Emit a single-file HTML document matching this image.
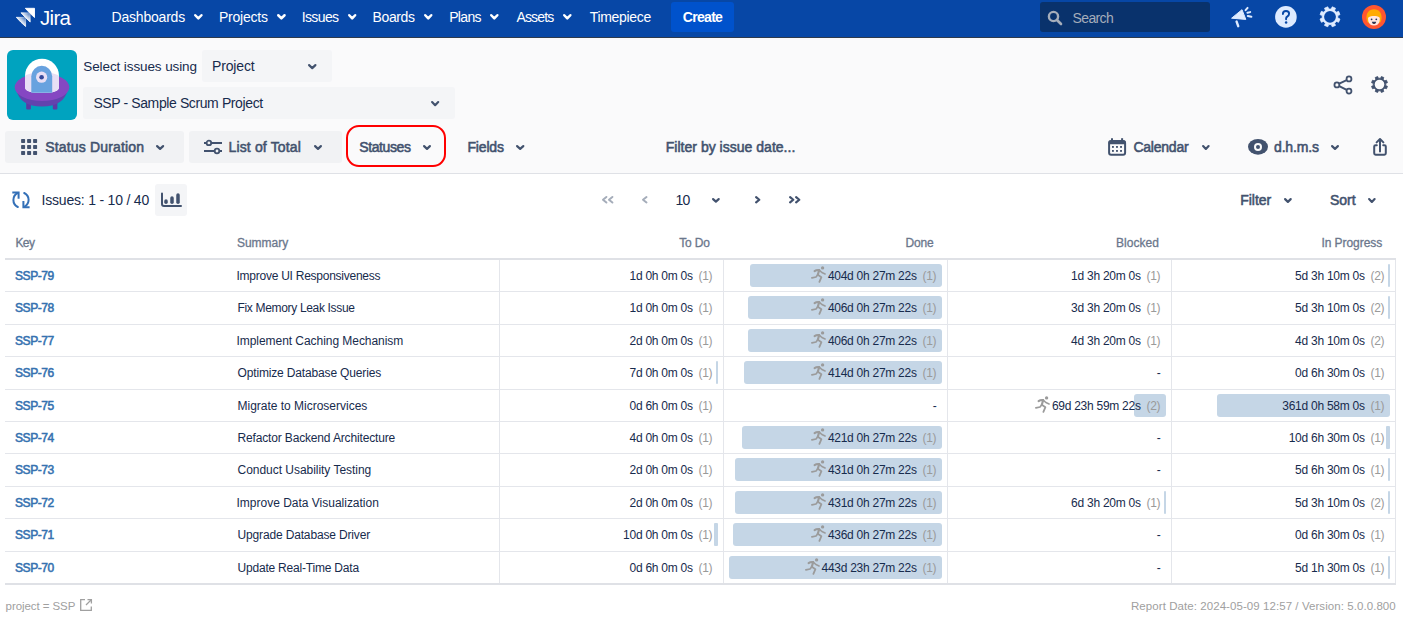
<!DOCTYPE html>
<html><head><meta charset="utf-8"><title>Status Duration</title>
<style>
html,body{margin:0;padding:0;width:1403px;height:620px;overflow:hidden;background:#FFFFFF;font-family:"Liberation Sans", sans-serif;position:relative}
svg{display:block}
</style></head><body>
<div style="position:absolute;left:0px;top:38px;width:1403px;height:135px;background:#FAFAFB;border-radius:0px;"></div>
<div style="position:absolute;left:0px;top:173px;width:1403px;height:1px;background:#DFE1E6;border-radius:0px;"></div>
<div style="position:absolute;left:0px;top:0px;width:1403px;height:37px;background:#0747A6;border-radius:0px;"></div>
<div style="position:absolute;left:0px;top:37px;width:1403px;height:1px;background:#2E3A4C;border-radius:0px;"></div>
<svg style="position:absolute;left:15px;top:7px" width="22" height="22" viewBox="0 0 22 22">
<defs><linearGradient id="lg1" x1="1" y1="0" x2="0" y2="1"><stop offset="0.05" stop-color="#fff" stop-opacity="0.25"/><stop offset="0.55" stop-color="#fff"/></linearGradient></defs>
<path d="M1.3 10.3 H10.6 V19.5 Q5.6 15.2 1.3 10.3 Z" fill="url(#lg1)" stroke="url(#lg1)" stroke-width="0.9" stroke-linejoin="round"/>
<path d="M6 5.8 H15.2 V15 Q10.3 10.7 6 5.8 Z" fill="url(#lg1)" stroke="url(#lg1)" stroke-width="0.9" stroke-linejoin="round"/>
<path d="M10.3 1.3 H19.5 V10.5 Q14.6 6.2 10.3 1.3 Z" fill="#fff" stroke="#fff" stroke-width="0.9" stroke-linejoin="round"/>
</svg>
<svg style="position:absolute;left:191.9px;top:12.3px;overflow:visible" width="12.7" height="9.7"><polyline points="3.25,3.25 6.35,6.45 9.45,3.25" fill="none" stroke="#FFFFFF" stroke-width="2.5" stroke-linecap="round" stroke-linejoin="round"/></svg>
<svg style="position:absolute;left:275.2px;top:12.3px;overflow:visible" width="12.8" height="9.7"><polyline points="3.25,3.25 6.4,6.45 9.55,3.25" fill="none" stroke="#FFFFFF" stroke-width="2.5" stroke-linecap="round" stroke-linejoin="round"/></svg>
<svg style="position:absolute;left:345.6px;top:12.3px;overflow:visible" width="12.4" height="9.7"><polyline points="3.25,3.25 6.2,6.45 9.15,3.25" fill="none" stroke="#FFFFFF" stroke-width="2.5" stroke-linecap="round" stroke-linejoin="round"/></svg>
<svg style="position:absolute;left:421.9px;top:12.3px;overflow:visible" width="12.5" height="9.7"><polyline points="3.25,3.25 6.25,6.45 9.25,3.25" fill="none" stroke="#FFFFFF" stroke-width="2.5" stroke-linecap="round" stroke-linejoin="round"/></svg>
<svg style="position:absolute;left:488.2px;top:12.3px;overflow:visible" width="12.6" height="9.7"><polyline points="3.25,3.25 6.3,6.45 9.35,3.25" fill="none" stroke="#FFFFFF" stroke-width="2.5" stroke-linecap="round" stroke-linejoin="round"/></svg>
<svg style="position:absolute;left:561.1px;top:12.3px;overflow:visible" width="12.6" height="9.7"><polyline points="3.25,3.25 6.3,6.45 9.35,3.25" fill="none" stroke="#FFFFFF" stroke-width="2.5" stroke-linecap="round" stroke-linejoin="round"/></svg>
<div style="position:absolute;left:671px;top:2px;width:63px;height:30px;background:#0052CC;border-radius:3px;"></div>
<div style="position:absolute;left:1040px;top:2px;width:170px;height:30px;background:#09326C;border-radius:3px;"></div>
<svg style="position:absolute;left:1047px;top:10px" width="16" height="16" viewBox="0 0 16 16"><circle cx="6.5" cy="6.5" r="4.6" fill="none" stroke="#A5ADBA" stroke-width="2.4"/><line x1="10" y1="10" x2="14" y2="14" stroke="#A5ADBA" stroke-width="2.6" stroke-linecap="round"/></svg>
<svg style="position:absolute;left:1228px;top:5px" width="26" height="24" viewBox="0 0 26 24">
<path d="M3.6 13.2 L14 4.7 L17.8 14.4 Z" fill="#DEEBFF" stroke="#DEEBFF" stroke-width="1" stroke-linejoin="round"/>
<line x1="8.6" y1="16.6" x2="10.2" y2="21.2" stroke="#DEEBFF" stroke-width="2.4" stroke-linecap="round"/>
<line x1="17.6" y1="5.2" x2="19.6" y2="2.9" stroke="#DEEBFF" stroke-width="2" stroke-linecap="round"/>
<line x1="19.4" y1="7.8" x2="22.2" y2="7.1" stroke="#DEEBFF" stroke-width="2" stroke-linecap="round"/>
<line x1="19.8" y1="11" x2="23.4" y2="11.8" stroke="#DEEBFF" stroke-width="2" stroke-linecap="round"/>
</svg>
<svg style="position:absolute;left:1274px;top:5px" width="24" height="24" viewBox="0 0 24 24"><circle cx="11.9" cy="11.9" r="10.8" fill="#DEEBFF"/>
<path d="M8.9 9.1 C8.9 7.1 10.3 6 12 6 C13.8 6 15.1 7.2 15.1 8.8 C15.1 10.3 14.2 11 13.2 11.6 C12.5 12 12.1 12.5 12.1 13.4 V14.2" fill="none" stroke="#0747A6" stroke-width="1.9" stroke-linecap="round"/>
<circle cx="12.1" cy="17.4" r="1.25" fill="#0747A6"/></svg>
<svg style="position:absolute;left:1318px;top:5px" width="24" height="24" viewBox="0 0 24 24"><polygon points="19.79,13.12 21.96,14.00 20.60,17.28 18.44,16.38 16.58,18.24 17.48,20.40 14.20,21.76 13.32,19.59 10.68,19.59 9.80,21.76 6.52,20.40 7.42,18.24 5.56,16.38 3.40,17.28 2.04,14.00 4.21,13.12 4.21,10.48 2.04,9.60 3.40,6.32 5.56,7.22 7.42,5.36 6.52,3.20 9.80,1.84 10.68,4.01 13.32,4.01 14.20,1.84 17.48,3.20 16.58,5.36 18.44,7.22 20.60,6.32 21.96,9.60 19.79,10.48" fill="#DEEBFF" stroke="#DEEBFF" stroke-width="0.8" stroke-linejoin="round"/><circle cx="12" cy="11.8" r="5.9" fill="#0747A6"/></svg>
<svg style="position:absolute;left:1362px;top:5px" width="24" height="24" viewBox="0 0 24 24"><circle cx="12" cy="12" r="12" fill="#FF5630"/>
<path d="M4.5 14 C3.8 8 7 4.2 12 4.2 C17 4.2 20.2 8 19.5 14 C19 17 18 18 17 18 L7 18 C6 18 5 17 4.5 14 Z" fill="#FFAB00"/>
<path d="M6 13.2 C6.6 11.6 9 10.6 12 11 C15 10.6 17.4 11.6 17.8 13.2 L17.6 16.2 C17 19 15 20.4 12 20.4 C9 20.4 7 19 6.3 16.2 Z" fill="#FFE7E0"/>
<circle cx="9.6" cy="14.3" r="0.9" fill="#253858"/><circle cx="14.3" cy="14.3" r="0.9" fill="#253858"/>
<path d="M9.9 16.7 H14.2 C14 18.3 13 19.1 12 19.1 C11 19.1 10.1 18.3 9.9 16.7 Z" fill="#253858"/><path d="M10.8 18.3 C11.3 18.9 12.7 18.9 13.2 18.3 Z" fill="#DE350B"/></svg>
<svg style="position:absolute;left:7px;top:50px" width="70" height="70" viewBox="0 0 70 70"><defs><clipPath id="sauc"><ellipse cx="35" cy="37.5" rx="27.3" ry="15.5"/></clipPath></defs>
<rect width="70" height="70" rx="6" fill="#00A3BF"/>
<rect x="19.2" y="47" width="4.7" height="12.4" rx="1" fill="#5B3BA5"/>
<rect x="45.8" y="47" width="4.6" height="12.4" rx="1" fill="#5B3BA5"/>
<path d="M9.5 40 Q13 56.5 35 56.5 Q57 56.5 60.5 40 Z" fill="#6243AE"/>
<ellipse cx="35" cy="37.3" rx="27.3" ry="13.8" fill="#8547C2"/>
<path d="M18 25.8 A17 17 0 0 1 52 25.8 V37 Q52 43 35 43 Q18 43 18 37 Z" fill="#FFFFFF"/>
<path d="M18 25.8 A17 17 0 0 1 52 25.8 V37 Q52 43 35 43 Q18 43 18 37 Z" fill="#E8DFF5" clip-path="url(#sauc)"/>
<path d="M24.3 26.3 A10.45 10.45 0 0 1 45.2 26.3 V42.8 H24.3 Z" fill="#68A2DF"/>
<circle cx="34.6" cy="27.2" r="5.6" fill="#E8DFF5"/>
<circle cx="34.6" cy="27.2" r="2.3" fill="#35489A"/></svg>
<div style="position:absolute;left:202px;top:50px;width:130px;height:32px;background:#F4F5F7;border-radius:3px;"></div>
<svg style="position:absolute;left:305.7px;top:62px;overflow:visible" width="12.5" height="9.2"><polyline points="3.1,3.1 6.25,6.1 9.4,3.1" fill="none" stroke="#42526E" stroke-width="2.2" stroke-linecap="round" stroke-linejoin="round"/></svg>
<div style="position:absolute;left:83px;top:87px;width:372px;height:32px;background:#F4F5F7;border-radius:3px;"></div>
<svg style="position:absolute;left:428.9px;top:98.7px;overflow:visible" width="12.3" height="9.3"><polyline points="3.1,3.1 6.15,6.2 9.2,3.1" fill="none" stroke="#42526E" stroke-width="2.2" stroke-linecap="round" stroke-linejoin="round"/></svg>
<svg style="position:absolute;left:1332px;top:74px" width="22" height="22" viewBox="0 0 22 22"><circle cx="4.9" cy="10.9" r="2.45" fill="none" stroke="#42526E" stroke-width="1.8"/>
<circle cx="17" cy="4.9" r="2.45" fill="none" stroke="#42526E" stroke-width="1.8"/>
<circle cx="17" cy="17.1" r="2.45" fill="none" stroke="#42526E" stroke-width="1.8"/>
<line x1="7.2" y1="9.7" x2="14.7" y2="6.1" stroke="#42526E" stroke-width="1.9"/>
<line x1="7.2" y1="12.1" x2="14.7" y2="15.9" stroke="#42526E" stroke-width="1.9"/></svg>
<svg style="position:absolute;left:1368px;top:73px" width="24" height="24" viewBox="0 0 24 24"><polygon points="17.79,12.66 19.49,13.35 18.46,15.84 16.77,15.13 15.13,16.77 15.84,18.46 13.35,19.49 12.66,17.79 10.34,17.79 9.65,19.49 7.16,18.46 7.87,16.77 6.23,15.13 4.54,15.84 3.51,13.35 5.21,12.66 5.21,10.34 3.51,9.65 4.54,7.16 6.23,7.87 7.87,6.23 7.16,4.54 9.65,3.51 10.34,5.21 12.66,5.21 13.35,3.51 15.84,4.54 15.13,6.23 16.77,7.87 18.46,7.16 19.49,9.65 17.79,10.34" fill="#42526E" stroke="#42526E" stroke-width="0.8" stroke-linejoin="round"/><circle cx="11.5" cy="11.5" r="4.8" fill="#FAFAFB"/></svg>
<div style="position:absolute;left:5px;top:131px;width:179px;height:32px;background:#F1F2F4;border-radius:3px;"></div>
<svg style="position:absolute;left:21px;top:139px" width="17" height="17" viewBox="0 0 17 17"><rect x="0.1" y="0" width="4" height="4" rx="0.7" fill="#42526E"/><rect x="0.1" y="6" width="4" height="4" rx="0.7" fill="#42526E"/><rect x="0.1" y="12" width="4" height="4" rx="0.7" fill="#42526E"/><rect x="6.1" y="0" width="4" height="4" rx="0.7" fill="#42526E"/><rect x="6.1" y="6" width="4" height="4" rx="0.7" fill="#42526E"/><rect x="6.1" y="12" width="4" height="4" rx="0.7" fill="#42526E"/><rect x="12.1" y="0" width="4" height="4" rx="0.7" fill="#42526E"/><rect x="12.1" y="6" width="4" height="4" rx="0.7" fill="#42526E"/><rect x="12.1" y="12" width="4" height="4" rx="0.7" fill="#42526E"/></svg>
<svg style="position:absolute;left:154px;top:143px;overflow:visible" width="12.2" height="9"><polyline points="3.1,3.1 6.1,5.9 9.1,3.1" fill="none" stroke="#42526E" stroke-width="2.2" stroke-linecap="round" stroke-linejoin="round"/></svg>
<div style="position:absolute;left:189px;top:131px;width:153px;height:32px;background:#F1F2F4;border-radius:3px;"></div>
<svg style="position:absolute;left:203px;top:138px" width="20" height="18" viewBox="0 0 20 18"><line x1="1" y1="5" x2="19" y2="5" stroke="#42526E" stroke-width="2"/><line x1="1" y1="13" x2="19" y2="13" stroke="#42526E" stroke-width="2"/>
<circle cx="5.9" cy="4.9" r="2.3" fill="#F1F2F4" stroke="#42526E" stroke-width="1.8"/><circle cx="14" cy="13" r="2.3" fill="#F1F2F4" stroke="#42526E" stroke-width="1.8"/></svg>
<svg style="position:absolute;left:312px;top:143px;overflow:visible" width="12" height="9"><polyline points="3.1,3.1 6,5.9 8.9,3.1" fill="none" stroke="#42526E" stroke-width="2.2" stroke-linecap="round" stroke-linejoin="round"/></svg>
<div style="position:absolute;left:346px;top:125px;width:96px;height:38px;border:2px solid #FF0000;border-radius:13px"></div>
<svg style="position:absolute;left:421px;top:143px;overflow:visible" width="12" height="9"><polyline points="3.1,3.1 6,5.9 8.9,3.1" fill="none" stroke="#42526E" stroke-width="2.2" stroke-linecap="round" stroke-linejoin="round"/></svg>
<svg style="position:absolute;left:514px;top:143px;overflow:visible" width="12.4" height="9"><polyline points="3.1,3.1 6.2,5.9 9.3,3.1" fill="none" stroke="#42526E" stroke-width="2.2" stroke-linecap="round" stroke-linejoin="round"/></svg>
<svg style="position:absolute;left:1107px;top:137px" width="20" height="20" viewBox="0 0 20 20"><rect x="2.1" y="3.9" width="16" height="13.8" rx="2" fill="none" stroke="#42526E" stroke-width="2"/><rect x="1.6" y="3.4" width="17" height="3.8" rx="1.5" fill="#42526E"/>
<line x1="5" y1="1.2" x2="5" y2="4" stroke="#42526E" stroke-width="2"/><line x1="15.1" y1="1.2" x2="15.1" y2="4" stroke="#42526E" stroke-width="2"/><rect x="5.0" y="9" width="1.85" height="1.85" fill="#42526E"/><rect x="5.0" y="13" width="1.85" height="1.85" fill="#42526E"/><rect x="9.05" y="9" width="1.85" height="1.85" fill="#42526E"/><rect x="9.05" y="13" width="1.85" height="1.85" fill="#42526E"/><rect x="13.1" y="9" width="1.85" height="1.85" fill="#42526E"/><rect x="13.1" y="13" width="1.85" height="1.85" fill="#42526E"/></svg>
<svg style="position:absolute;left:1199.5px;top:143px;overflow:visible" width="11.7" height="9"><polyline points="3.1,3.1 5.85,5.9 8.6,3.1" fill="none" stroke="#42526E" stroke-width="2.2" stroke-linecap="round" stroke-linejoin="round"/></svg>
<svg style="position:absolute;left:1247px;top:138px" width="22" height="18" viewBox="0 0 22 18"><ellipse cx="11" cy="8.85" rx="10" ry="7.8" fill="#42526E"/><circle cx="11" cy="8.9" r="4" fill="#FAFAFB"/><circle cx="11" cy="8.9" r="2" fill="#42526E"/></svg>
<svg style="position:absolute;left:1329px;top:143px;overflow:visible" width="12" height="9"><polyline points="3.1,3.1 6,5.9 8.9,3.1" fill="none" stroke="#42526E" stroke-width="2.2" stroke-linecap="round" stroke-linejoin="round"/></svg>
<svg style="position:absolute;left:1371px;top:137px" width="18" height="20" viewBox="0 0 18 20"><path d="M9 14.4 V2.2 M5.6 5.4 L9 2 L12.4 5.4" fill="none" stroke="#42526E" stroke-width="2" stroke-linecap="round" stroke-linejoin="round"/>
<path d="M5.8 8.2 H4.6 Q3.2 8.2 3.2 9.6 V16.3 Q3.2 17.7 4.6 17.7 H13.4 Q14.8 17.7 14.8 16.3 V9.6 Q14.8 8.2 13.4 8.2 H12.2" fill="none" stroke="#42526E" stroke-width="2" stroke-linecap="round"/></svg>
<svg style="position:absolute;left:11px;top:190px" width="20" height="20" viewBox="0 0 20 20"><path d="M6.6 3.2 C3.8 4.6 2.4 7 2.4 10 C2.4 13 4 15.6 6.8 17" fill="none" stroke="#3470B7" stroke-width="2" stroke-linecap="round"/>
<path d="M2.3 2.6 H7.6 V7.8" fill="none" stroke="#3470B7" stroke-width="2" stroke-linecap="square"/>
<path d="M13.2 3 C16 4.4 17.6 6.8 17.6 9.8 C17.6 12.8 16 15.4 13.3 16.8" fill="none" stroke="#3470B7" stroke-width="2" stroke-linecap="round"/>
<path d="M17.6 17.2 H12.4 V12" fill="none" stroke="#3470B7" stroke-width="2" stroke-linecap="square"/></svg>
<div style="position:absolute;left:155px;top:184px;width:32px;height:32px;background:#F4F5F7;border-radius:3px;"></div>
<svg style="position:absolute;left:160px;top:192px" width="22" height="16" viewBox="0 0 22 16"><path d="M2 1.5 V12 Q2 14 4 14 H21" fill="none" stroke="#42526E" stroke-width="2" stroke-linecap="round"/>
<line x1="6" y1="9" x2="6" y2="10.3" stroke="#42526E" stroke-width="3.5" stroke-linecap="round"/>
<line x1="12" y1="6" x2="12" y2="10.3" stroke="#42526E" stroke-width="3.5" stroke-linecap="round"/>
<line x1="18" y1="3" x2="18" y2="10.3" stroke="#42526E" stroke-width="3.5" stroke-linecap="round"/></svg>
<svg style="position:absolute;left:599.8px;top:194.3px" width="9.4" height="11.5"><polyline points="6.4,3 3,5.75 6.4,8.5" fill="none" stroke="#A5ADBA" stroke-width="2" stroke-linecap="round" stroke-linejoin="round"/></svg>
<svg style="position:absolute;left:605.8px;top:194.3px" width="9.4" height="11.5"><polyline points="6.4,3 3,5.75 6.4,8.5" fill="none" stroke="#A5ADBA" stroke-width="2" stroke-linecap="round" stroke-linejoin="round"/></svg>
<svg style="position:absolute;left:639.7px;top:194.3px" width="9.5" height="11.5"><polyline points="6.5,3 3,5.75 6.5,8.5" fill="none" stroke="#A5ADBA" stroke-width="2" stroke-linecap="round" stroke-linejoin="round"/></svg>
<svg style="position:absolute;left:710px;top:195.9px;overflow:visible" width="11.8" height="8.7"><polyline points="3.1,3.1 5.9,5.6 8.7,3.1" fill="none" stroke="#42526E" stroke-width="2.2" stroke-linecap="round" stroke-linejoin="round"/></svg>
<svg style="position:absolute;left:752.7px;top:194.3px" width="9.4" height="11.5"><polyline points="3.1,3.1 6.3,5.75 3.1,8.4" fill="none" stroke="#42526E" stroke-width="2.2" stroke-linecap="round" stroke-linejoin="round"/></svg>
<svg style="position:absolute;left:786.8px;top:194.3px" width="9.4" height="11.5"><polyline points="3.1,3.1 6.3,5.75 3.1,8.4" fill="none" stroke="#42526E" stroke-width="2.2" stroke-linecap="round" stroke-linejoin="round"/></svg>
<svg style="position:absolute;left:792.7px;top:194.3px" width="9.4" height="11.5"><polyline points="3.1,3.1 6.3,5.75 3.1,8.4" fill="none" stroke="#42526E" stroke-width="2.2" stroke-linecap="round" stroke-linejoin="round"/></svg>
<svg style="position:absolute;left:1282px;top:196px;overflow:visible" width="11.8" height="9"><polyline points="3.1,3.1 5.9,5.9 8.7,3.1" fill="none" stroke="#42526E" stroke-width="2.2" stroke-linecap="round" stroke-linejoin="round"/></svg>
<svg style="position:absolute;left:1366.2px;top:196px;overflow:visible" width="11.7" height="9"><polyline points="3.1,3.1 5.85,5.9 8.6,3.1" fill="none" stroke="#42526E" stroke-width="2.2" stroke-linecap="round" stroke-linejoin="round"/></svg>
<div style="position:absolute;left:5px;top:258px;width:1391px;height:2px;background:#DFE1E6;border-radius:0px;"></div>
<div style="position:absolute;left:5px;top:291px;width:1391px;height:1px;background:#E4E6EB;border-radius:0px;"></div>
<div style="position:absolute;left:5px;top:324px;width:1391px;height:1px;background:#E4E6EB;border-radius:0px;"></div>
<div style="position:absolute;left:5px;top:356px;width:1391px;height:1px;background:#E4E6EB;border-radius:0px;"></div>
<div style="position:absolute;left:5px;top:389px;width:1391px;height:1px;background:#E4E6EB;border-radius:0px;"></div>
<div style="position:absolute;left:5px;top:421px;width:1391px;height:1px;background:#E4E6EB;border-radius:0px;"></div>
<div style="position:absolute;left:5px;top:453px;width:1391px;height:1px;background:#E4E6EB;border-radius:0px;"></div>
<div style="position:absolute;left:5px;top:486px;width:1391px;height:1px;background:#E4E6EB;border-radius:0px;"></div>
<div style="position:absolute;left:5px;top:518px;width:1391px;height:1px;background:#E4E6EB;border-radius:0px;"></div>
<div style="position:absolute;left:5px;top:551px;width:1391px;height:1px;background:#E4E6EB;border-radius:0px;"></div>
<div style="position:absolute;left:5px;top:583px;width:1391px;height:2px;background:#DFE1E6;border-radius:0px;"></div>
<div style="position:absolute;left:499px;top:260px;width:1px;height:323px;background:#E4E6EB;border-radius:0px;"></div>
<div style="position:absolute;left:723px;top:260px;width:1px;height:323px;background:#E4E6EB;border-radius:0px;"></div>
<div style="position:absolute;left:947px;top:260px;width:1px;height:323px;background:#E4E6EB;border-radius:0px;"></div>
<div style="position:absolute;left:1171px;top:260px;width:1px;height:323px;background:#E4E6EB;border-radius:0px;"></div>
<div style="position:absolute;left:1395px;top:260px;width:1px;height:323px;background:#E4E6EB;border-radius:0px;"></div>
<div style="position:absolute;left:750px;top:264px;width:192px;height:23px;background:#C5D6E6;border-radius:3px;"></div>
<div style="position:absolute;left:1388px;top:264px;width:2px;height:23px;background:#C5D6E6;border-radius:1px;"></div>
<div style="position:absolute;left:748px;top:296px;width:194px;height:23px;background:#C5D6E6;border-radius:3px;"></div>
<div style="position:absolute;left:1388px;top:296px;width:2px;height:23px;background:#C5D6E6;border-radius:1px;"></div>
<div style="position:absolute;left:748px;top:329px;width:194px;height:23px;background:#C5D6E6;border-radius:3px;"></div>
<div style="position:absolute;left:716px;top:361px;width:2px;height:23px;background:#C5D6E6;border-radius:1px;"></div>
<div style="position:absolute;left:744px;top:361px;width:198px;height:23px;background:#C5D6E6;border-radius:3px;"></div>
<div style="position:absolute;left:1134px;top:394px;width:32px;height:23px;background:#C5D6E6;border-radius:3px;"></div>
<div style="position:absolute;left:1217px;top:394px;width:173px;height:23px;background:#C5D6E6;border-radius:3px;"></div>
<div style="position:absolute;left:742px;top:426px;width:200px;height:23px;background:#C5D6E6;border-radius:3px;"></div>
<div style="position:absolute;left:1386px;top:426px;width:4px;height:23px;background:#C5D6E6;border-radius:1px;"></div>
<div style="position:absolute;left:735px;top:458px;width:207px;height:23px;background:#C5D6E6;border-radius:3px;"></div>
<div style="position:absolute;left:1388px;top:458px;width:2px;height:23px;background:#C5D6E6;border-radius:1px;"></div>
<div style="position:absolute;left:735px;top:491px;width:207px;height:23px;background:#C5D6E6;border-radius:3px;"></div>
<div style="position:absolute;left:1164px;top:491px;width:2px;height:23px;background:#C5D6E6;border-radius:1px;"></div>
<div style="position:absolute;left:1388px;top:491px;width:2px;height:23px;background:#C5D6E6;border-radius:1px;"></div>
<div style="position:absolute;left:714px;top:523px;width:4px;height:23px;background:#C5D6E6;border-radius:1px;"></div>
<div style="position:absolute;left:733px;top:523px;width:209px;height:23px;background:#C5D6E6;border-radius:3px;"></div>
<div style="position:absolute;left:729px;top:556px;width:213px;height:23px;background:#C5D6E6;border-radius:3px;"></div>
<div style="position:absolute;left:1388px;top:556px;width:2px;height:23px;background:#C5D6E6;border-radius:1px;"></div>
<svg style="position:absolute;left:79px;top:598px" width="15" height="15" viewBox="0 0 15 15"><path d="M6 1.7 H1.7 V12.3 H12.3 V8.5" fill="none" stroke="#A0A0A0" stroke-width="1.3"/><path d="M8.5 1.6 H12.4 V5.5 M12.4 1.6 L7 7" fill="none" stroke="#A0A0A0" stroke-width="1.3"/></svg>
<div style="position:absolute;left:40.00px;top:8.00px;font-size:20.5px;line-height:20.5px;font-weight:400;color:#FFFFFF;letter-spacing:-0.710px;white-space:nowrap;">Jira</div>
<div style="position:absolute;left:111.60px;top:10.00px;font-size:14px;line-height:14px;font-weight:400;color:#FFFFFF;letter-spacing:-0.210px;white-space:nowrap;">Dashboards</div>
<div style="position:absolute;left:219.00px;top:10.00px;font-size:14px;line-height:14px;font-weight:400;color:#FFFFFF;letter-spacing:-0.225px;white-space:nowrap;">Projects</div>
<div style="position:absolute;left:301.70px;top:10.00px;font-size:14px;line-height:14px;font-weight:400;color:#FFFFFF;letter-spacing:-0.612px;white-space:nowrap;">Issues</div>
<div style="position:absolute;left:372.60px;top:10.00px;font-size:14px;line-height:14px;font-weight:400;color:#FFFFFF;letter-spacing:-0.392px;white-space:nowrap;">Boards</div>
<div style="position:absolute;left:449.20px;top:10.00px;font-size:14px;line-height:14px;font-weight:400;color:#FFFFFF;letter-spacing:-0.655px;white-space:nowrap;">Plans</div>
<div style="position:absolute;left:516.40px;top:10.00px;font-size:14px;line-height:14px;font-weight:400;color:#FFFFFF;letter-spacing:-0.843px;white-space:nowrap;">Assets</div>
<div style="position:absolute;left:589.80px;top:10.00px;font-size:14px;line-height:14px;font-weight:400;color:#FFFFFF;letter-spacing:-0.334px;white-space:nowrap;">Timepiece</div>
<div style="position:absolute;left:682.80px;top:10.00px;font-size:14px;line-height:14px;font-weight:700;color:#FFFFFF;letter-spacing:-0.699px;white-space:nowrap;">Create</div>
<div style="position:absolute;left:1072.50px;top:10.80px;font-size:14px;line-height:14px;font-weight:400;color:#A5ADBA;letter-spacing:-0.614px;white-space:nowrap;">Search</div>
<div style="position:absolute;left:83.30px;top:60.00px;font-size:13.5px;line-height:13.5px;font-weight:400;color:#172B4D;letter-spacing:-0.103px;white-space:nowrap;">Select issues using</div>
<div style="position:absolute;left:212.00px;top:59.10px;font-size:14px;line-height:14px;font-weight:400;color:#172B4D;letter-spacing:-0.147px;white-space:nowrap;">Project</div>
<div style="position:absolute;left:93.40px;top:96.00px;font-size:14px;line-height:14px;font-weight:400;color:#172B4D;letter-spacing:-0.389px;white-space:nowrap;">SSP - Sample Scrum Project</div>
<div style="position:absolute;left:45.30px;top:139.60px;font-size:14px;line-height:14px;font-weight:400;color:#42526E;letter-spacing:0.164px;white-space:nowrap;-webkit-text-stroke:0.55px currentColor">Status Duration</div>
<div style="position:absolute;left:228.50px;top:139.60px;font-size:14px;line-height:14px;font-weight:400;color:#42526E;letter-spacing:0.150px;white-space:nowrap;-webkit-text-stroke:0.55px currentColor">List of Total</div>
<div style="position:absolute;left:359.20px;top:139.80px;font-size:14px;line-height:14px;font-weight:400;color:#42526E;letter-spacing:-0.382px;white-space:nowrap;-webkit-text-stroke:0.55px currentColor">Statuses</div>
<div style="position:absolute;left:467.50px;top:139.60px;font-size:14px;line-height:14px;font-weight:400;color:#42526E;letter-spacing:-0.189px;white-space:nowrap;-webkit-text-stroke:0.55px currentColor">Fields</div>
<div style="position:absolute;left:665.80px;top:139.60px;font-size:14px;line-height:14px;font-weight:400;color:#42526E;letter-spacing:0.015px;white-space:nowrap;-webkit-text-stroke:0.55px currentColor">Filter by issue date...</div>
<div style="position:absolute;left:1133.40px;top:139.60px;font-size:14px;line-height:14px;font-weight:400;color:#42526E;letter-spacing:-0.222px;white-space:nowrap;-webkit-text-stroke:0.55px currentColor">Calendar</div>
<div style="position:absolute;left:1274.00px;top:139.60px;font-size:14px;line-height:14px;font-weight:400;color:#42526E;letter-spacing:-0.151px;white-space:nowrap;-webkit-text-stroke:0.55px currentColor">d.h.m.s</div>
<div style="position:absolute;left:41.50px;top:193.40px;font-size:14px;line-height:14px;font-weight:400;color:#172B4D;letter-spacing:-0.200px;white-space:nowrap;">Issues: 1 - 10 / 40</div>
<div style="position:absolute;left:675.60px;top:192.60px;font-size:14px;line-height:14px;font-weight:400;color:#172B4D;letter-spacing:-0.986px;white-space:nowrap;">10</div>
<div style="position:absolute;left:1240.20px;top:192.90px;font-size:14px;line-height:14px;font-weight:400;color:#42526E;letter-spacing:-0.010px;white-space:nowrap;-webkit-text-stroke:0.55px currentColor">Filter</div>
<div style="position:absolute;left:1330.00px;top:192.90px;font-size:14px;line-height:14px;font-weight:400;color:#42526E;letter-spacing:-0.029px;white-space:nowrap;-webkit-text-stroke:0.55px currentColor">Sort</div>
<div style="position:absolute;left:15.40px;top:237.00px;font-size:12px;line-height:12px;font-weight:400;color:#6B778C;letter-spacing:-0.539px;white-space:nowrap;-webkit-text-stroke:0.3px currentColor">Key</div>
<div style="position:absolute;left:236.90px;top:237.00px;font-size:12px;line-height:12px;font-weight:400;color:#6B778C;letter-spacing:-0.007px;white-space:nowrap;-webkit-text-stroke:0.3px currentColor">Summary</div>
<div style="position:absolute;left:679.20px;top:237.00px;font-size:12px;line-height:12px;font-weight:400;color:#6B778C;letter-spacing:-0.168px;white-space:nowrap;-webkit-text-stroke:0.3px currentColor">To Do</div>
<div style="position:absolute;left:905.50px;top:237.00px;font-size:12px;line-height:12px;font-weight:400;color:#6B778C;letter-spacing:-0.138px;white-space:nowrap;-webkit-text-stroke:0.3px currentColor">Done</div>
<div style="position:absolute;left:1116.00px;top:237.00px;font-size:12px;line-height:12px;font-weight:400;color:#6B778C;letter-spacing:0.030px;white-space:nowrap;-webkit-text-stroke:0.3px currentColor">Blocked</div>
<div style="position:absolute;left:1321.40px;top:237.00px;font-size:12px;line-height:12px;font-weight:400;color:#6B778C;letter-spacing:-0.056px;white-space:nowrap;-webkit-text-stroke:0.3px currentColor">In Progress</div>
<div style="position:absolute;left:15.00px;top:270.00px;font-size:12px;line-height:12px;font-weight:400;color:#3572B0;letter-spacing:-0.436px;white-space:nowrap;-webkit-text-stroke:0.55px currentColor">SSP-79</div>
<div style="position:absolute;left:236.50px;top:270.00px;font-size:12px;line-height:12px;font-weight:400;color:#172B4D;letter-spacing:-0.253px;white-space:nowrap;">Improve UI Responsiveness</div>
<div style="position:absolute;left:698.53px;top:270.00px;font-size:12px;line-height:12px;font-weight:400;color:#9A9A9A;letter-spacing:-0.350px;white-space:nowrap;">(1)</div>
<div style="position:absolute;left:629.53px;top:270.00px;font-size:12px;line-height:12px;font-weight:400;color:#172B4D;letter-spacing:-0.264px;white-space:nowrap;">1d 0h 0m 0s</div>
<div style="position:absolute;left:922.53px;top:270.00px;font-size:12px;line-height:12px;font-weight:400;color:#9A9A9A;letter-spacing:-0.350px;white-space:nowrap;">(1)</div>
<div style="position:absolute;left:827.89px;top:270.00px;font-size:12px;line-height:12px;font-weight:400;color:#172B4D;letter-spacing:-0.264px;white-space:nowrap;">404d 0h 27m 22s</div>
<svg style="position:absolute;left:811.39px;top:266px" width="17" height="18" viewBox="0 0 17 18">
<circle cx="11.6" cy="1.9" r="1.65" fill="#9B9B9B"/>
<path d="M3.6 5.2 Q5.5 3.8 8.2 4.1 L6.8 8.8" fill="none" stroke="#9B9B9B" stroke-width="2.1" stroke-linecap="round" stroke-linejoin="round"/>
<path d="M8.2 4.1 L10.9 6.5 L14.1 7.9" fill="none" stroke="#9B9B9B" stroke-width="1.6" stroke-linecap="round" stroke-linejoin="round"/>
<path d="M6.8 8.8 L5 11 L0.9 11.8" fill="none" stroke="#9B9B9B" stroke-width="1.7" stroke-linecap="round" stroke-linejoin="round"/>
<path d="M6.8 8.8 L10.4 11.2 L8.4 15.8" fill="none" stroke="#9B9B9B" stroke-width="1.8" stroke-linecap="round" stroke-linejoin="round"/>
</svg>
<div style="position:absolute;left:1146.53px;top:270.00px;font-size:12px;line-height:12px;font-weight:400;color:#9A9A9A;letter-spacing:-0.350px;white-space:nowrap;">(1)</div>
<div style="position:absolute;left:1071.12px;top:270.00px;font-size:12px;line-height:12px;font-weight:400;color:#172B4D;letter-spacing:-0.264px;white-space:nowrap;">1d 3h 20m 0s</div>
<div style="position:absolute;left:1370.53px;top:270.00px;font-size:12px;line-height:12px;font-weight:400;color:#9A9A9A;letter-spacing:-0.350px;white-space:nowrap;">(2)</div>
<div style="position:absolute;left:1295.12px;top:270.00px;font-size:12px;line-height:12px;font-weight:400;color:#172B4D;letter-spacing:-0.264px;white-space:nowrap;">5d 3h 10m 0s</div>
<div style="position:absolute;left:15.00px;top:302.00px;font-size:12px;line-height:12px;font-weight:400;color:#3572B0;letter-spacing:-0.436px;white-space:nowrap;-webkit-text-stroke:0.55px currentColor">SSP-78</div>
<div style="position:absolute;left:237.50px;top:302.00px;font-size:12px;line-height:12px;font-weight:400;color:#172B4D;letter-spacing:-0.328px;white-space:nowrap;">Fix Memory Leak Issue</div>
<div style="position:absolute;left:698.53px;top:302.00px;font-size:12px;line-height:12px;font-weight:400;color:#9A9A9A;letter-spacing:-0.350px;white-space:nowrap;">(1)</div>
<div style="position:absolute;left:629.53px;top:302.00px;font-size:12px;line-height:12px;font-weight:400;color:#172B4D;letter-spacing:-0.264px;white-space:nowrap;">1d 0h 0m 0s</div>
<div style="position:absolute;left:922.53px;top:302.00px;font-size:12px;line-height:12px;font-weight:400;color:#9A9A9A;letter-spacing:-0.350px;white-space:nowrap;">(1)</div>
<div style="position:absolute;left:827.89px;top:302.00px;font-size:12px;line-height:12px;font-weight:400;color:#172B4D;letter-spacing:-0.264px;white-space:nowrap;">406d 0h 27m 22s</div>
<svg style="position:absolute;left:811.39px;top:298px" width="17" height="18" viewBox="0 0 17 18">
<circle cx="11.6" cy="1.9" r="1.65" fill="#9B9B9B"/>
<path d="M3.6 5.2 Q5.5 3.8 8.2 4.1 L6.8 8.8" fill="none" stroke="#9B9B9B" stroke-width="2.1" stroke-linecap="round" stroke-linejoin="round"/>
<path d="M8.2 4.1 L10.9 6.5 L14.1 7.9" fill="none" stroke="#9B9B9B" stroke-width="1.6" stroke-linecap="round" stroke-linejoin="round"/>
<path d="M6.8 8.8 L5 11 L0.9 11.8" fill="none" stroke="#9B9B9B" stroke-width="1.7" stroke-linecap="round" stroke-linejoin="round"/>
<path d="M6.8 8.8 L10.4 11.2 L8.4 15.8" fill="none" stroke="#9B9B9B" stroke-width="1.8" stroke-linecap="round" stroke-linejoin="round"/>
</svg>
<div style="position:absolute;left:1146.53px;top:302.00px;font-size:12px;line-height:12px;font-weight:400;color:#9A9A9A;letter-spacing:-0.350px;white-space:nowrap;">(1)</div>
<div style="position:absolute;left:1071.12px;top:302.00px;font-size:12px;line-height:12px;font-weight:400;color:#172B4D;letter-spacing:-0.264px;white-space:nowrap;">3d 3h 20m 0s</div>
<div style="position:absolute;left:1370.53px;top:302.00px;font-size:12px;line-height:12px;font-weight:400;color:#9A9A9A;letter-spacing:-0.350px;white-space:nowrap;">(2)</div>
<div style="position:absolute;left:1295.12px;top:302.00px;font-size:12px;line-height:12px;font-weight:400;color:#172B4D;letter-spacing:-0.264px;white-space:nowrap;">5d 3h 10m 0s</div>
<div style="position:absolute;left:15.00px;top:335.00px;font-size:12px;line-height:12px;font-weight:400;color:#3572B0;letter-spacing:-0.436px;white-space:nowrap;-webkit-text-stroke:0.55px currentColor">SSP-77</div>
<div style="position:absolute;left:236.50px;top:335.00px;font-size:12px;line-height:12px;font-weight:400;color:#172B4D;letter-spacing:-0.049px;white-space:nowrap;">Implement Caching Mechanism</div>
<div style="position:absolute;left:698.53px;top:335.00px;font-size:12px;line-height:12px;font-weight:400;color:#9A9A9A;letter-spacing:-0.350px;white-space:nowrap;">(1)</div>
<div style="position:absolute;left:629.53px;top:335.00px;font-size:12px;line-height:12px;font-weight:400;color:#172B4D;letter-spacing:-0.264px;white-space:nowrap;">2d 0h 0m 0s</div>
<div style="position:absolute;left:922.53px;top:335.00px;font-size:12px;line-height:12px;font-weight:400;color:#9A9A9A;letter-spacing:-0.350px;white-space:nowrap;">(1)</div>
<div style="position:absolute;left:827.89px;top:335.00px;font-size:12px;line-height:12px;font-weight:400;color:#172B4D;letter-spacing:-0.264px;white-space:nowrap;">406d 0h 27m 22s</div>
<svg style="position:absolute;left:811.39px;top:331px" width="17" height="18" viewBox="0 0 17 18">
<circle cx="11.6" cy="1.9" r="1.65" fill="#9B9B9B"/>
<path d="M3.6 5.2 Q5.5 3.8 8.2 4.1 L6.8 8.8" fill="none" stroke="#9B9B9B" stroke-width="2.1" stroke-linecap="round" stroke-linejoin="round"/>
<path d="M8.2 4.1 L10.9 6.5 L14.1 7.9" fill="none" stroke="#9B9B9B" stroke-width="1.6" stroke-linecap="round" stroke-linejoin="round"/>
<path d="M6.8 8.8 L5 11 L0.9 11.8" fill="none" stroke="#9B9B9B" stroke-width="1.7" stroke-linecap="round" stroke-linejoin="round"/>
<path d="M6.8 8.8 L10.4 11.2 L8.4 15.8" fill="none" stroke="#9B9B9B" stroke-width="1.8" stroke-linecap="round" stroke-linejoin="round"/>
</svg>
<div style="position:absolute;left:1146.53px;top:335.00px;font-size:12px;line-height:12px;font-weight:400;color:#9A9A9A;letter-spacing:-0.350px;white-space:nowrap;">(1)</div>
<div style="position:absolute;left:1071.12px;top:335.00px;font-size:12px;line-height:12px;font-weight:400;color:#172B4D;letter-spacing:-0.264px;white-space:nowrap;">4d 3h 20m 0s</div>
<div style="position:absolute;left:1370.53px;top:335.00px;font-size:12px;line-height:12px;font-weight:400;color:#9A9A9A;letter-spacing:-0.350px;white-space:nowrap;">(2)</div>
<div style="position:absolute;left:1295.12px;top:335.00px;font-size:12px;line-height:12px;font-weight:400;color:#172B4D;letter-spacing:-0.264px;white-space:nowrap;">4d 3h 10m 0s</div>
<div style="position:absolute;left:15.00px;top:367.00px;font-size:12px;line-height:12px;font-weight:400;color:#3572B0;letter-spacing:-0.436px;white-space:nowrap;-webkit-text-stroke:0.55px currentColor">SSP-76</div>
<div style="position:absolute;left:237.50px;top:367.00px;font-size:12px;line-height:12px;font-weight:400;color:#172B4D;letter-spacing:-0.154px;white-space:nowrap;">Optimize Database Queries</div>
<div style="position:absolute;left:698.53px;top:367.00px;font-size:12px;line-height:12px;font-weight:400;color:#9A9A9A;letter-spacing:-0.350px;white-space:nowrap;">(1)</div>
<div style="position:absolute;left:629.53px;top:367.00px;font-size:12px;line-height:12px;font-weight:400;color:#172B4D;letter-spacing:-0.264px;white-space:nowrap;">7d 0h 0m 0s</div>
<div style="position:absolute;left:922.53px;top:367.00px;font-size:12px;line-height:12px;font-weight:400;color:#9A9A9A;letter-spacing:-0.350px;white-space:nowrap;">(1)</div>
<div style="position:absolute;left:827.89px;top:367.00px;font-size:12px;line-height:12px;font-weight:400;color:#172B4D;letter-spacing:-0.264px;white-space:nowrap;">414d 0h 27m 22s</div>
<svg style="position:absolute;left:811.39px;top:363px" width="17" height="18" viewBox="0 0 17 18">
<circle cx="11.6" cy="1.9" r="1.65" fill="#9B9B9B"/>
<path d="M3.6 5.2 Q5.5 3.8 8.2 4.1 L6.8 8.8" fill="none" stroke="#9B9B9B" stroke-width="2.1" stroke-linecap="round" stroke-linejoin="round"/>
<path d="M8.2 4.1 L10.9 6.5 L14.1 7.9" fill="none" stroke="#9B9B9B" stroke-width="1.6" stroke-linecap="round" stroke-linejoin="round"/>
<path d="M6.8 8.8 L5 11 L0.9 11.8" fill="none" stroke="#9B9B9B" stroke-width="1.7" stroke-linecap="round" stroke-linejoin="round"/>
<path d="M6.8 8.8 L10.4 11.2 L8.4 15.8" fill="none" stroke="#9B9B9B" stroke-width="1.8" stroke-linecap="round" stroke-linejoin="round"/>
</svg>
<div style="position:absolute;left:1156.80px;top:367.00px;font-size:12px;line-height:12px;font-weight:400;color:#172B4D;letter-spacing:-0.264px;white-space:nowrap;">-</div>
<div style="position:absolute;left:1370.53px;top:367.00px;font-size:12px;line-height:12px;font-weight:400;color:#9A9A9A;letter-spacing:-0.350px;white-space:nowrap;">(1)</div>
<div style="position:absolute;left:1295.12px;top:367.00px;font-size:12px;line-height:12px;font-weight:400;color:#172B4D;letter-spacing:-0.264px;white-space:nowrap;">0d 6h 30m 0s</div>
<div style="position:absolute;left:15.00px;top:400.00px;font-size:12px;line-height:12px;font-weight:400;color:#3572B0;letter-spacing:-0.436px;white-space:nowrap;-webkit-text-stroke:0.55px currentColor">SSP-75</div>
<div style="position:absolute;left:237.50px;top:400.00px;font-size:12px;line-height:12px;font-weight:400;color:#172B4D;letter-spacing:-0.010px;white-space:nowrap;">Migrate to Microservices</div>
<div style="position:absolute;left:698.53px;top:400.00px;font-size:12px;line-height:12px;font-weight:400;color:#9A9A9A;letter-spacing:-0.350px;white-space:nowrap;">(1)</div>
<div style="position:absolute;left:629.53px;top:400.00px;font-size:12px;line-height:12px;font-weight:400;color:#172B4D;letter-spacing:-0.264px;white-space:nowrap;">0d 6h 0m 0s</div>
<div style="position:absolute;left:932.80px;top:400.00px;font-size:12px;line-height:12px;font-weight:400;color:#172B4D;letter-spacing:-0.264px;white-space:nowrap;">-</div>
<div style="position:absolute;left:1146.53px;top:400.00px;font-size:12px;line-height:12px;font-weight:400;color:#9A9A9A;letter-spacing:-0.350px;white-space:nowrap;">(2)</div>
<div style="position:absolute;left:1051.89px;top:400.00px;font-size:12px;line-height:12px;font-weight:400;color:#172B4D;letter-spacing:-0.264px;white-space:nowrap;">69d 23h 59m 22s</div>
<svg style="position:absolute;left:1035.39px;top:396px" width="17" height="18" viewBox="0 0 17 18">
<circle cx="11.6" cy="1.9" r="1.65" fill="#9B9B9B"/>
<path d="M3.6 5.2 Q5.5 3.8 8.2 4.1 L6.8 8.8" fill="none" stroke="#9B9B9B" stroke-width="2.1" stroke-linecap="round" stroke-linejoin="round"/>
<path d="M8.2 4.1 L10.9 6.5 L14.1 7.9" fill="none" stroke="#9B9B9B" stroke-width="1.6" stroke-linecap="round" stroke-linejoin="round"/>
<path d="M6.8 8.8 L5 11 L0.9 11.8" fill="none" stroke="#9B9B9B" stroke-width="1.7" stroke-linecap="round" stroke-linejoin="round"/>
<path d="M6.8 8.8 L10.4 11.2 L8.4 15.8" fill="none" stroke="#9B9B9B" stroke-width="1.8" stroke-linecap="round" stroke-linejoin="round"/>
</svg>
<div style="position:absolute;left:1370.53px;top:400.00px;font-size:12px;line-height:12px;font-weight:400;color:#9A9A9A;letter-spacing:-0.350px;white-space:nowrap;">(1)</div>
<div style="position:absolute;left:1282.30px;top:400.00px;font-size:12px;line-height:12px;font-weight:400;color:#172B4D;letter-spacing:-0.264px;white-space:nowrap;">361d 0h 58m 0s</div>
<div style="position:absolute;left:15.00px;top:432.00px;font-size:12px;line-height:12px;font-weight:400;color:#3572B0;letter-spacing:-0.436px;white-space:nowrap;-webkit-text-stroke:0.55px currentColor">SSP-74</div>
<div style="position:absolute;left:237.50px;top:432.00px;font-size:12px;line-height:12px;font-weight:400;color:#172B4D;letter-spacing:-0.156px;white-space:nowrap;">Refactor Backend Architecture</div>
<div style="position:absolute;left:698.53px;top:432.00px;font-size:12px;line-height:12px;font-weight:400;color:#9A9A9A;letter-spacing:-0.350px;white-space:nowrap;">(1)</div>
<div style="position:absolute;left:629.53px;top:432.00px;font-size:12px;line-height:12px;font-weight:400;color:#172B4D;letter-spacing:-0.264px;white-space:nowrap;">4d 0h 0m 0s</div>
<div style="position:absolute;left:922.53px;top:432.00px;font-size:12px;line-height:12px;font-weight:400;color:#9A9A9A;letter-spacing:-0.350px;white-space:nowrap;">(1)</div>
<div style="position:absolute;left:827.89px;top:432.00px;font-size:12px;line-height:12px;font-weight:400;color:#172B4D;letter-spacing:-0.264px;white-space:nowrap;">421d 0h 27m 22s</div>
<svg style="position:absolute;left:811.39px;top:428px" width="17" height="18" viewBox="0 0 17 18">
<circle cx="11.6" cy="1.9" r="1.65" fill="#9B9B9B"/>
<path d="M3.6 5.2 Q5.5 3.8 8.2 4.1 L6.8 8.8" fill="none" stroke="#9B9B9B" stroke-width="2.1" stroke-linecap="round" stroke-linejoin="round"/>
<path d="M8.2 4.1 L10.9 6.5 L14.1 7.9" fill="none" stroke="#9B9B9B" stroke-width="1.6" stroke-linecap="round" stroke-linejoin="round"/>
<path d="M6.8 8.8 L5 11 L0.9 11.8" fill="none" stroke="#9B9B9B" stroke-width="1.7" stroke-linecap="round" stroke-linejoin="round"/>
<path d="M6.8 8.8 L10.4 11.2 L8.4 15.8" fill="none" stroke="#9B9B9B" stroke-width="1.8" stroke-linecap="round" stroke-linejoin="round"/>
</svg>
<div style="position:absolute;left:1156.80px;top:432.00px;font-size:12px;line-height:12px;font-weight:400;color:#172B4D;letter-spacing:-0.264px;white-space:nowrap;">-</div>
<div style="position:absolute;left:1370.53px;top:432.00px;font-size:12px;line-height:12px;font-weight:400;color:#9A9A9A;letter-spacing:-0.350px;white-space:nowrap;">(1)</div>
<div style="position:absolute;left:1288.71px;top:432.00px;font-size:12px;line-height:12px;font-weight:400;color:#172B4D;letter-spacing:-0.264px;white-space:nowrap;">10d 6h 30m 0s</div>
<div style="position:absolute;left:15.00px;top:464.00px;font-size:12px;line-height:12px;font-weight:400;color:#3572B0;letter-spacing:-0.436px;white-space:nowrap;-webkit-text-stroke:0.55px currentColor">SSP-73</div>
<div style="position:absolute;left:237.50px;top:464.00px;font-size:12px;line-height:12px;font-weight:400;color:#172B4D;letter-spacing:-0.032px;white-space:nowrap;">Conduct Usability Testing</div>
<div style="position:absolute;left:698.53px;top:464.00px;font-size:12px;line-height:12px;font-weight:400;color:#9A9A9A;letter-spacing:-0.350px;white-space:nowrap;">(1)</div>
<div style="position:absolute;left:629.53px;top:464.00px;font-size:12px;line-height:12px;font-weight:400;color:#172B4D;letter-spacing:-0.264px;white-space:nowrap;">2d 0h 0m 0s</div>
<div style="position:absolute;left:922.53px;top:464.00px;font-size:12px;line-height:12px;font-weight:400;color:#9A9A9A;letter-spacing:-0.350px;white-space:nowrap;">(1)</div>
<div style="position:absolute;left:827.89px;top:464.00px;font-size:12px;line-height:12px;font-weight:400;color:#172B4D;letter-spacing:-0.264px;white-space:nowrap;">431d 0h 27m 22s</div>
<svg style="position:absolute;left:811.39px;top:460px" width="17" height="18" viewBox="0 0 17 18">
<circle cx="11.6" cy="1.9" r="1.65" fill="#9B9B9B"/>
<path d="M3.6 5.2 Q5.5 3.8 8.2 4.1 L6.8 8.8" fill="none" stroke="#9B9B9B" stroke-width="2.1" stroke-linecap="round" stroke-linejoin="round"/>
<path d="M8.2 4.1 L10.9 6.5 L14.1 7.9" fill="none" stroke="#9B9B9B" stroke-width="1.6" stroke-linecap="round" stroke-linejoin="round"/>
<path d="M6.8 8.8 L5 11 L0.9 11.8" fill="none" stroke="#9B9B9B" stroke-width="1.7" stroke-linecap="round" stroke-linejoin="round"/>
<path d="M6.8 8.8 L10.4 11.2 L8.4 15.8" fill="none" stroke="#9B9B9B" stroke-width="1.8" stroke-linecap="round" stroke-linejoin="round"/>
</svg>
<div style="position:absolute;left:1156.80px;top:464.00px;font-size:12px;line-height:12px;font-weight:400;color:#172B4D;letter-spacing:-0.264px;white-space:nowrap;">-</div>
<div style="position:absolute;left:1370.53px;top:464.00px;font-size:12px;line-height:12px;font-weight:400;color:#9A9A9A;letter-spacing:-0.350px;white-space:nowrap;">(1)</div>
<div style="position:absolute;left:1295.12px;top:464.00px;font-size:12px;line-height:12px;font-weight:400;color:#172B4D;letter-spacing:-0.264px;white-space:nowrap;">5d 6h 30m 0s</div>
<div style="position:absolute;left:15.00px;top:497.00px;font-size:12px;line-height:12px;font-weight:400;color:#3572B0;letter-spacing:-0.436px;white-space:nowrap;-webkit-text-stroke:0.55px currentColor">SSP-72</div>
<div style="position:absolute;left:236.50px;top:497.00px;font-size:12px;line-height:12px;font-weight:400;color:#172B4D;letter-spacing:-0.006px;white-space:nowrap;">Improve Data Visualization</div>
<div style="position:absolute;left:698.53px;top:497.00px;font-size:12px;line-height:12px;font-weight:400;color:#9A9A9A;letter-spacing:-0.350px;white-space:nowrap;">(1)</div>
<div style="position:absolute;left:629.53px;top:497.00px;font-size:12px;line-height:12px;font-weight:400;color:#172B4D;letter-spacing:-0.264px;white-space:nowrap;">2d 0h 0m 0s</div>
<div style="position:absolute;left:922.53px;top:497.00px;font-size:12px;line-height:12px;font-weight:400;color:#9A9A9A;letter-spacing:-0.350px;white-space:nowrap;">(1)</div>
<div style="position:absolute;left:827.89px;top:497.00px;font-size:12px;line-height:12px;font-weight:400;color:#172B4D;letter-spacing:-0.264px;white-space:nowrap;">431d 0h 27m 22s</div>
<svg style="position:absolute;left:811.39px;top:493px" width="17" height="18" viewBox="0 0 17 18">
<circle cx="11.6" cy="1.9" r="1.65" fill="#9B9B9B"/>
<path d="M3.6 5.2 Q5.5 3.8 8.2 4.1 L6.8 8.8" fill="none" stroke="#9B9B9B" stroke-width="2.1" stroke-linecap="round" stroke-linejoin="round"/>
<path d="M8.2 4.1 L10.9 6.5 L14.1 7.9" fill="none" stroke="#9B9B9B" stroke-width="1.6" stroke-linecap="round" stroke-linejoin="round"/>
<path d="M6.8 8.8 L5 11 L0.9 11.8" fill="none" stroke="#9B9B9B" stroke-width="1.7" stroke-linecap="round" stroke-linejoin="round"/>
<path d="M6.8 8.8 L10.4 11.2 L8.4 15.8" fill="none" stroke="#9B9B9B" stroke-width="1.8" stroke-linecap="round" stroke-linejoin="round"/>
</svg>
<div style="position:absolute;left:1146.53px;top:497.00px;font-size:12px;line-height:12px;font-weight:400;color:#9A9A9A;letter-spacing:-0.350px;white-space:nowrap;">(1)</div>
<div style="position:absolute;left:1071.12px;top:497.00px;font-size:12px;line-height:12px;font-weight:400;color:#172B4D;letter-spacing:-0.264px;white-space:nowrap;">6d 3h 20m 0s</div>
<div style="position:absolute;left:1370.53px;top:497.00px;font-size:12px;line-height:12px;font-weight:400;color:#9A9A9A;letter-spacing:-0.350px;white-space:nowrap;">(2)</div>
<div style="position:absolute;left:1295.12px;top:497.00px;font-size:12px;line-height:12px;font-weight:400;color:#172B4D;letter-spacing:-0.264px;white-space:nowrap;">5d 3h 10m 0s</div>
<div style="position:absolute;left:15.00px;top:529.00px;font-size:12px;line-height:12px;font-weight:400;color:#3572B0;letter-spacing:-0.436px;white-space:nowrap;-webkit-text-stroke:0.55px currentColor">SSP-71</div>
<div style="position:absolute;left:237.50px;top:529.00px;font-size:12px;line-height:12px;font-weight:400;color:#172B4D;letter-spacing:-0.153px;white-space:nowrap;">Upgrade Database Driver</div>
<div style="position:absolute;left:698.53px;top:529.00px;font-size:12px;line-height:12px;font-weight:400;color:#9A9A9A;letter-spacing:-0.350px;white-space:nowrap;">(1)</div>
<div style="position:absolute;left:623.12px;top:529.00px;font-size:12px;line-height:12px;font-weight:400;color:#172B4D;letter-spacing:-0.264px;white-space:nowrap;">10d 0h 0m 0s</div>
<div style="position:absolute;left:922.53px;top:529.00px;font-size:12px;line-height:12px;font-weight:400;color:#9A9A9A;letter-spacing:-0.350px;white-space:nowrap;">(1)</div>
<div style="position:absolute;left:827.89px;top:529.00px;font-size:12px;line-height:12px;font-weight:400;color:#172B4D;letter-spacing:-0.264px;white-space:nowrap;">436d 0h 27m 22s</div>
<svg style="position:absolute;left:811.39px;top:525px" width="17" height="18" viewBox="0 0 17 18">
<circle cx="11.6" cy="1.9" r="1.65" fill="#9B9B9B"/>
<path d="M3.6 5.2 Q5.5 3.8 8.2 4.1 L6.8 8.8" fill="none" stroke="#9B9B9B" stroke-width="2.1" stroke-linecap="round" stroke-linejoin="round"/>
<path d="M8.2 4.1 L10.9 6.5 L14.1 7.9" fill="none" stroke="#9B9B9B" stroke-width="1.6" stroke-linecap="round" stroke-linejoin="round"/>
<path d="M6.8 8.8 L5 11 L0.9 11.8" fill="none" stroke="#9B9B9B" stroke-width="1.7" stroke-linecap="round" stroke-linejoin="round"/>
<path d="M6.8 8.8 L10.4 11.2 L8.4 15.8" fill="none" stroke="#9B9B9B" stroke-width="1.8" stroke-linecap="round" stroke-linejoin="round"/>
</svg>
<div style="position:absolute;left:1156.80px;top:529.00px;font-size:12px;line-height:12px;font-weight:400;color:#172B4D;letter-spacing:-0.264px;white-space:nowrap;">-</div>
<div style="position:absolute;left:1370.53px;top:529.00px;font-size:12px;line-height:12px;font-weight:400;color:#9A9A9A;letter-spacing:-0.350px;white-space:nowrap;">(1)</div>
<div style="position:absolute;left:1295.12px;top:529.00px;font-size:12px;line-height:12px;font-weight:400;color:#172B4D;letter-spacing:-0.264px;white-space:nowrap;">0d 6h 30m 0s</div>
<div style="position:absolute;left:15.00px;top:562.00px;font-size:12px;line-height:12px;font-weight:400;color:#3572B0;letter-spacing:-0.436px;white-space:nowrap;-webkit-text-stroke:0.55px currentColor">SSP-70</div>
<div style="position:absolute;left:237.50px;top:562.00px;font-size:12px;line-height:12px;font-weight:400;color:#172B4D;letter-spacing:-0.202px;white-space:nowrap;">Update Real-Time Data</div>
<div style="position:absolute;left:698.53px;top:562.00px;font-size:12px;line-height:12px;font-weight:400;color:#9A9A9A;letter-spacing:-0.350px;white-space:nowrap;">(1)</div>
<div style="position:absolute;left:629.53px;top:562.00px;font-size:12px;line-height:12px;font-weight:400;color:#172B4D;letter-spacing:-0.264px;white-space:nowrap;">0d 6h 0m 0s</div>
<div style="position:absolute;left:922.53px;top:562.00px;font-size:12px;line-height:12px;font-weight:400;color:#9A9A9A;letter-spacing:-0.350px;white-space:nowrap;">(1)</div>
<div style="position:absolute;left:821.48px;top:562.00px;font-size:12px;line-height:12px;font-weight:400;color:#172B4D;letter-spacing:-0.264px;white-space:nowrap;">443d 23h 27m 22s</div>
<svg style="position:absolute;left:804.98px;top:558px" width="17" height="18" viewBox="0 0 17 18">
<circle cx="11.6" cy="1.9" r="1.65" fill="#9B9B9B"/>
<path d="M3.6 5.2 Q5.5 3.8 8.2 4.1 L6.8 8.8" fill="none" stroke="#9B9B9B" stroke-width="2.1" stroke-linecap="round" stroke-linejoin="round"/>
<path d="M8.2 4.1 L10.9 6.5 L14.1 7.9" fill="none" stroke="#9B9B9B" stroke-width="1.6" stroke-linecap="round" stroke-linejoin="round"/>
<path d="M6.8 8.8 L5 11 L0.9 11.8" fill="none" stroke="#9B9B9B" stroke-width="1.7" stroke-linecap="round" stroke-linejoin="round"/>
<path d="M6.8 8.8 L10.4 11.2 L8.4 15.8" fill="none" stroke="#9B9B9B" stroke-width="1.8" stroke-linecap="round" stroke-linejoin="round"/>
</svg>
<div style="position:absolute;left:1156.80px;top:562.00px;font-size:12px;line-height:12px;font-weight:400;color:#172B4D;letter-spacing:-0.264px;white-space:nowrap;">-</div>
<div style="position:absolute;left:1370.53px;top:562.00px;font-size:12px;line-height:12px;font-weight:400;color:#9A9A9A;letter-spacing:-0.350px;white-space:nowrap;">(1)</div>
<div style="position:absolute;left:1295.12px;top:562.00px;font-size:12px;line-height:12px;font-weight:400;color:#172B4D;letter-spacing:-0.264px;white-space:nowrap;">5d 1h 30m 0s</div>
<div style="position:absolute;left:5.60px;top:600.80px;font-size:11.5px;line-height:11.5px;font-weight:400;color:#A0A0A0;letter-spacing:-0.072px;white-space:nowrap;">project = SSP</div>
<div style="position:absolute;left:1131.00px;top:601.20px;font-size:11.5px;line-height:11.5px;font-weight:400;color:#A0A0A0;letter-spacing:0.066px;white-space:nowrap;">Report Date: 2024-05-09 12:57 / Version: 5.0.0.800</div>
</body></html>
